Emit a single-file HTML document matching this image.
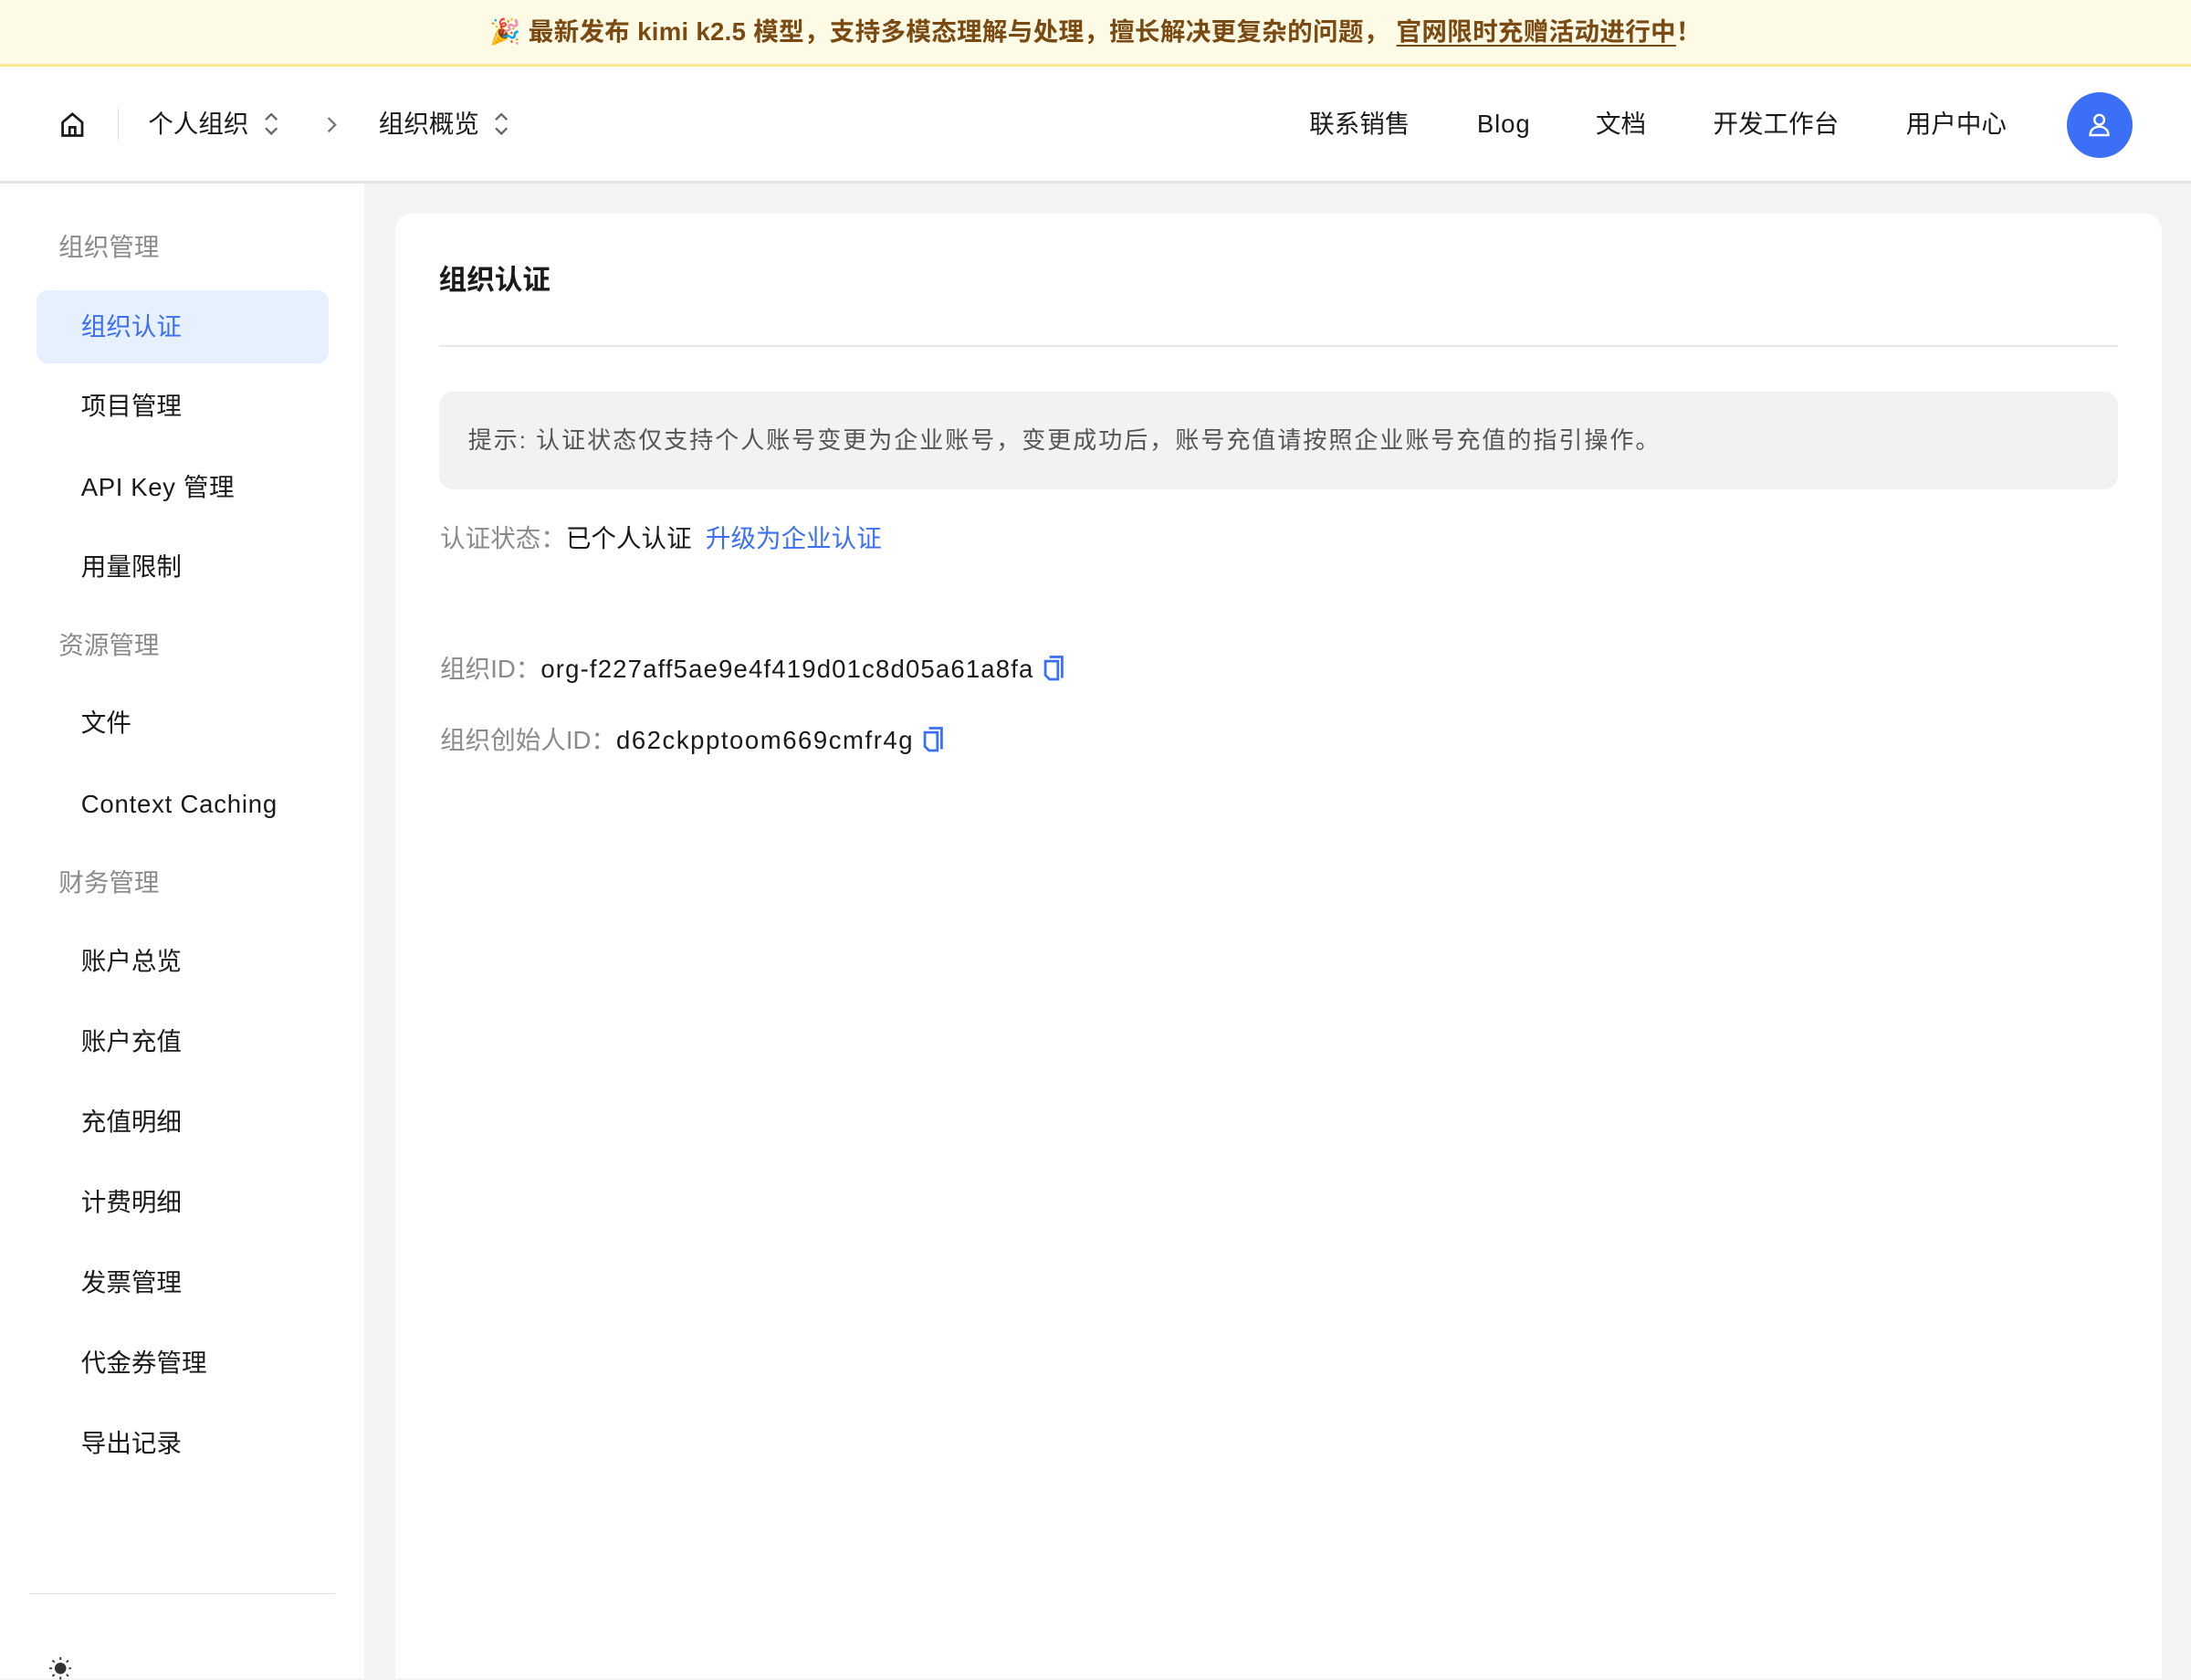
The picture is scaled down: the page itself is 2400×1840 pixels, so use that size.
<!DOCTYPE html>
<html><head><meta charset="utf-8"><style>
html{zoom:1.5306}
*{box-sizing:border-box;margin:0;padding:0}
body{width:1568px;height:1201px;overflow:hidden;font-family:"Liberation Sans","Noto Sans CJK SC",sans-serif;color:#1a1a1a;background:#f3f3f3;position:relative;line-height:1.2}
.banner{position:absolute;left:0;top:0;width:1568px;height:48px;background:#fdfbe6;border-bottom:2px solid #f7ea8c;text-align:center;line-height:46px;font-size:18px;font-weight:bold;color:#7a4a12;letter-spacing:0.2px}
.banner u{text-underline-offset:3px}
.header{position:absolute;left:0;top:48px;width:1568px;height:83px;background:#fff;border-bottom:2px solid #e3e3e3}
.abs{position:absolute}
.nav{font-size:18px;top:29px;color:#1a1a1a;line-height:24px}
.side{position:absolute;left:0;top:131px;width:261px;height:1070px;background:#fff}
.sec{position:absolute;left:42px;font-size:18px;color:#8a8a8a;line-height:24px}
.item{position:absolute;left:58px;font-size:18px;color:#1a1a1a;line-height:24px}
.card{position:absolute;left:283px;top:153px;width:1264px;height:1048px;background:#fff;border-radius:12px 12px 0 0}
.lbl{color:#8a8a8a}
.row{position:absolute;left:32px;font-size:18px;line-height:24px;display:flex;align-items:center;white-space:nowrap}
.id{letter-spacing:0.75px}
</style></head><body>
<div class="banner">🎉 最新发布 kimi k2.5 模型，支持多模态理解与处理，擅长解决更复杂的问题， <u>官网限时充赠活动进行中</u>！</div>
<div class="header">
<svg class="abs" style="left:42px;top:31px" width="20" height="20" viewBox="0 0 20 20" fill="none" stroke="#1a1a1a" stroke-width="1.8"><path d="M3 8.5L10 2.5l7 6V18H3z"/><path d="M8 18v-6h4v6"/></svg>
<div class="abs" style="left:84px;top:30px;width:1px;height:22px;background:#ddd"></div>
<div class="abs nav" style="left:106px">个人组织</div>
<svg class="abs" style="left:188px;top:32px" width="12" height="18" viewBox="0 0 12 18" fill="none" stroke="#666" stroke-width="1.5"><path d="M2 6l4-4 4 4M2 12l4 4 4-4"/></svg>
<svg class="abs" style="left:232px;top:34px" width="10" height="14" viewBox="0 0 10 14" fill="none" stroke="#777" stroke-width="1.5"><path d="M3 2l5 5-5 5"/></svg>
<div class="abs nav" style="left:271px">组织概览</div>
<svg class="abs" style="left:353px;top:32px" width="12" height="18" viewBox="0 0 12 18" fill="none" stroke="#666" stroke-width="1.5"><path d="M2 6l4-4 4 4M2 12l4 4 4-4"/></svg>
<div class="abs nav" style="left:937px">联系销售</div>
<div class="abs nav" style="left:1057px;letter-spacing:0.6px">Blog</div>
<div class="abs nav" style="left:1142px">文档</div>
<div class="abs nav" style="left:1226px">开发工作台</div>
<div class="abs nav" style="left:1364px">用户中心</div>
<div class="abs" style="left:1479px;top:18px;width:47px;height:47px;border-radius:50%;background:#3b6ff5"></div>
<svg class="abs" style="left:1493px;top:32px" width="19" height="19" viewBox="0 0 19 19" fill="none" stroke="#fff" stroke-width="1.6"><circle cx="9.5" cy="6" r="3.5"/><path d="M3 17c0-4 3-6 6.5-6s6.5 2 6.5 6z"/></svg>
</div>
<div class="side">
<div class="sec" style="top:34px">组织管理</div>
<div class="abs" style="left:26px;top:77px;width:209px;height:52px;border-radius:8px;background:#e6f0fe"></div>
<div class="item" style="top:91px;color:#3b6ff5">组织认证</div>
<div class="item" style="top:148px">项目管理</div>
<div class="item" style="top:206px;letter-spacing:0.4px">API Key 管理</div>
<div class="item" style="top:263px">用量限制</div>
<div class="sec" style="top:319px">资源管理</div>
<div class="item" style="top:375px">文件</div>
<div class="item" style="top:433px;letter-spacing:0.5px">Context Caching</div>
<div class="sec" style="top:489px">财务管理</div>
<div class="item" style="top:545px">账户总览</div>
<div class="item" style="top:603px">账户充值</div>
<div class="item" style="top:660px">充值明细</div>
<div class="item" style="top:718px">计费明细</div>
<div class="item" style="top:775px">发票管理</div>
<div class="item" style="top:833px">代金券管理</div>
<div class="item" style="top:890px">导出记录</div>
<div class="abs" style="left:21px;top:1009px;width:219px;height:1px;background:#e3e3e3"></div>
<svg class="abs" style="left:35px;top:1055px" width="16" height="16" viewBox="0 0 16 16" fill="#333" stroke="#333" stroke-width="1.2"><circle cx="8" cy="8" r="3.5"/><path d="M8 0v2M8 14v2M0 8h2M14 8h2M2.3 2.3l1.4 1.4M12.3 12.3l1.4 1.4M2.3 13.7l1.4-1.4M12.3 3.7l1.4-1.4"/></svg>
</div>
<div class="card">
<div class="abs" style="left:31px;top:35px;font-size:20px;font-weight:bold;line-height:26px">组织认证</div>
<div class="abs" style="left:31px;top:94px;width:1202px;height:1px;background:#e8e8e8"></div>
<div class="abs" style="left:31px;top:127px;width:1202px;height:70px;border-radius:10px;background:#f2f2f2;padding:0 21px;line-height:70px;font-size:17px;color:#555;letter-spacing:1.3px;white-space:nowrap">提示: 认证状态仅支持个人账号变更为企业账号，变更成功后，账号充值请按照企业账号充值的指引操作。</div>
<div class="row" style="top:221px"><span class="lbl">认证状态：</span>已个人认证&nbsp;&nbsp;<span style="color:#3b6ff5">升级为企业认证</span></div>
<div class="row" style="top:314px"><span class="lbl">组织ID：</span><span class="id">org-f227aff5ae9e4f419d01c8d05a61a8fa</span>
<svg style="margin-left:6px" width="16" height="20" viewBox="0 0 16 20" fill="none" stroke="#3b6ff5" stroke-width="1.8"><path d="M5 1h9v15"/><path d="M2 4h9v13H5l-3-3z"/></svg></div>
<div class="row" style="top:365px"><span class="lbl">组织创始人ID：</span><span class="id" style="letter-spacing:1px">d62ckpptoom669cmfr4g</span>
<svg style="margin-left:6px" width="16" height="20" viewBox="0 0 16 20" fill="none" stroke="#3b6ff5" stroke-width="1.8"><path d="M5 1h9v15"/><path d="M2 4h9v13H5l-3-3z"/></svg></div>
</div>
</body></html>
